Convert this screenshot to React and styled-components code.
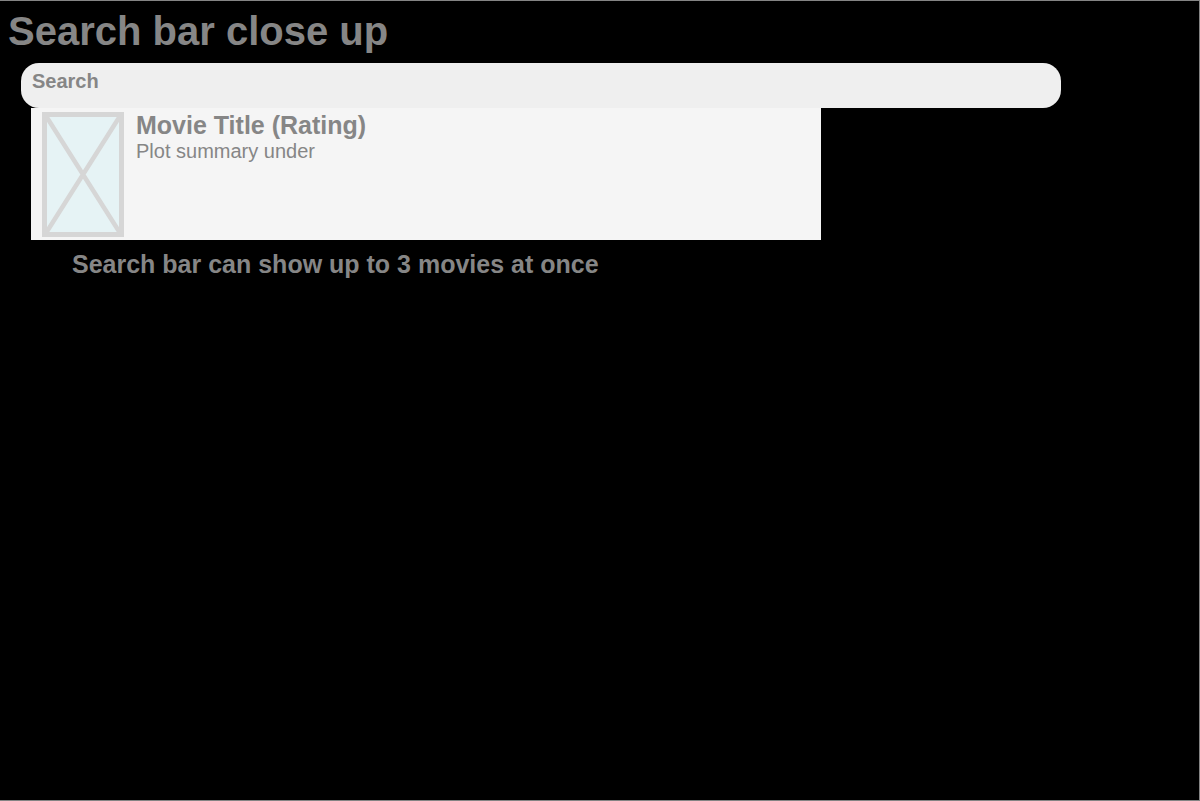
import React from "react";
import styled, { createGlobalStyle } from "styled-components";

const GlobalStyle = createGlobalStyle`
  *, *::before, *::after { box-sizing: border-box; }
  body {
    margin: 0;
    background: #000;
    color: #868686;
    font-family: "Liberation Sans", Arial, Helvetica, sans-serif;
  }
`;

const Page = styled.main`
  min-height: 100vh;
  padding: 6px 138px 20px 8px;
  border: 1px solid #848484;
  border-left: 0;
`;

const PageTitle = styled.h1`
  margin: 0;
  font-size: 40px;
  line-height: 48px;
`;

const SearchArea = styled.form`
  margin: 8px 0 0 13px;
`;

const SearchInput = styled.input`
  display: block;
  width: 100%;
  height: 45px;
  padding: 0 11px 8px;
  border: 0;
  border-radius: 18px;
  background: #efefef;
  color: #868686;
  font: bold 20px "Liberation Sans", Arial, Helvetica, sans-serif;

  &::placeholder {
    color: #868686;
    opacity: 1;
  }
`;

const Results = styled.ul`
  width: 76%;
  margin: 0 0 0 10px;
  padding: 0;
  background: #f5f5f5;
  list-style: none;
`;

const ResultRow = styled.li`
  display: flex;
  gap: 11px;
  padding: 4px 11px 3px;
`;

const Poster = styled.svg`
  flex: none;
  width: 83px;
  height: 125px;
`;

const MovieTitle = styled.h2`
  margin: 0;
  font-size: 25px;
  line-height: 26px;
`;

const Plot = styled.p`
  margin: 0;
  font-size: 20px;
  line-height: 26px;
`;

const Note = styled.p`
  margin: 11px 0 0 51px;
  font-size: 25px;
  font-weight: bold;
  line-height: 26px;
`;

const movies = [{ title: "Movie Title (Rating)", plot: "Plot summary under" }];

function PosterPlaceholder() {
  return (
    <Poster viewBox="0 0 83 125" aria-hidden="true">
      <rect x="2.5" y="2.5" width="77" height="120" fill="#e6f3f5" />
      <path d="M4 4 78 121M78 4 4 121" stroke="#d6d6d6" strokeWidth="4.5" />
      <rect x="2.5" y="2.5" width="77" height="120" fill="none" stroke="#d6d6d6" strokeWidth="5" />
    </Poster>
  );
}

export default function App() {
  return (
    <>
      <GlobalStyle />
      <Page>
        <PageTitle>Search bar close up</PageTitle>
        <SearchArea role="search" onSubmit={(e) => e.preventDefault()}>
          <SearchInput type="text" placeholder="Search" aria-label="Search" />
          <Results>
            {movies.map((movie) => (
              <ResultRow key={movie.title}>
                <PosterPlaceholder />
                <div>
                  <MovieTitle>{movie.title}</MovieTitle>
                  <Plot>{movie.plot}</Plot>
                </div>
              </ResultRow>
            ))}
          </Results>
          <Note>Search bar can show up to 3 movies at once</Note>
        </SearchArea>
      </Page>
    </>
  );
}
